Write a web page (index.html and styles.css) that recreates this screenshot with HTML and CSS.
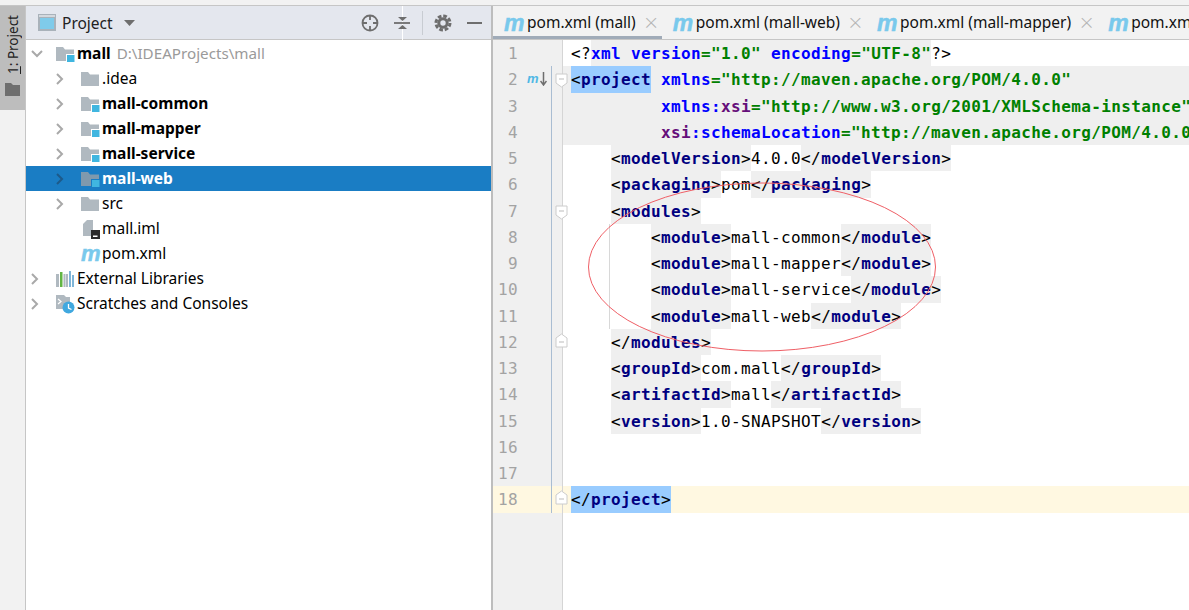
FILE: index.html
```html
<!DOCTYPE html>
<html lang="en">
<head>
<meta charset="utf-8">
<title>pom.xml (mall)</title>
<link rel="stylesheet" href="styles.css">
</head>
<body>
<svg class="defs" width="0" height="0" aria-hidden="true">
  <symbol id="folder" viewBox="0 0 20 16"><path d="M1 1h7l2 2.5h9V15H1z" fill="#b0b9c0"/></symbol>
  <symbol id="module" viewBox="0 0 20 16"><path d="M1 1h7l2 2.5h9V15H1z" fill="#b0b9c0"/><path d="M11 8h8v8h-8z" fill="#fff"/><path d="M12 9h7.500v7.500H12z" fill="#40b6e0"/></symbol>
  <symbol id="module-sel" viewBox="0 0 20 16"><path d="M1 1h7l2 2.500h9V15H1z" fill="#7f99ad"/><path d="M11 8h8.500v8.500H11z" fill="#1a7dc4"/><path d="M12 9h7.500v7.500H12z" fill="#40b6e0"/></symbol>
  <symbol id="chev" viewBox="0 0 10 14"><path d="M2 2l5 5-5 5" fill="none" stroke="currentColor" stroke-width="2"/></symbol>
</svg>
<div class="topstrip"></div>
<div class="main">
  <aside class="rail">
    <div class="rail-btn">
      <span class="rail-label"><u>1</u>: Project</span>
      <svg class="rail-icon" width="15" height="13" viewBox="0 0 15 13"><path d="M0 0h6l2 2h7v11H0z" fill="#6e6e6e"/></svg>
    </div>
  </aside>
  <section class="panel">
    <header class="panel-head">
      <svg class="head-win" width="18" height="17" viewBox="0 0 18 17"><path d="M0 0h18v17H0z" fill="#a9b2ba"/><path d="M1 1h16v2H1z" fill="#d4d9de"/><path d="M2 4h14v11H2z" fill="#7fcbea"/></svg>
      <span class="head-title">Project</span>
      <svg class="head-caret" width="11" height="6" viewBox="0 0 11 6"><path d="M0 0h11L5.500 6z" fill="#6e6e6e"/></svg>
      <div class="head-tools">
        <svg width="18" height="18" viewBox="0 0 18 18" class="tool-locate"><circle cx="9" cy="9" r="7.500" fill="none" stroke="#6e6e6e" stroke-width="1.800"/><path d="M9 1v5M9 12v5M1 9h5M12 9h5" stroke="#6e6e6e" stroke-width="1.800"/></svg>
        <svg width="16" height="34" viewBox="0 0 16 34" class="tool-collapse"><path d="M8.500 0v34" stroke="#fff" stroke-width="1"/><path d="M4 11h9l-4.500 4zM4 23h9l-4.500-4z" fill="#6e6e6e"/><path d="M0 17h16" stroke="#6e6e6e" stroke-width="1.800"/></svg>
        <span class="tool-sep"></span>
        <svg width="18" height="18" viewBox="0 0 18 18" class="tool-gear"><circle cx="9" cy="9" r="7" fill="none" stroke="#6e6e6e" stroke-width="3" stroke-dasharray="3.700 1.800"/><circle cx="9" cy="9" r="4.200" fill="none" stroke="#6e6e6e" stroke-width="3"/></svg>
        <svg width="15" height="2" viewBox="0 0 15 2" class="tool-min"><path d="M0 0h15v2H0z" fill="#6e6e6e"/></svg>
      </div>
    </header>
    <div class="tree">
      <div class="node"><svg class="arrow open" width="14" height="10" viewBox="0 0 14 10"><path d="M2 2l5 5 5-5" fill="none" stroke="currentColor" stroke-width="2"/></svg><svg class="ico" width="20" height="16"><use href="#module"/></svg><b>mall</b><span class="path">D:\IDEAProjects\mall</span></div>
      <div class="node lvl"><svg class="arrow" width="10" height="14"><use href="#chev"/></svg><svg class="ico" width="20" height="16"><use href="#folder"/></svg><span>.idea</span></div>
      <div class="node lvl"><svg class="arrow" width="10" height="14"><use href="#chev"/></svg><svg class="ico" width="20" height="16"><use href="#module"/></svg><b>mall-common</b></div>
      <div class="node lvl"><svg class="arrow" width="10" height="14"><use href="#chev"/></svg><svg class="ico" width="20" height="16"><use href="#module"/></svg><b>mall-mapper</b></div>
      <div class="node lvl"><svg class="arrow" width="10" height="14"><use href="#chev"/></svg><svg class="ico" width="20" height="16"><use href="#module"/></svg><b>mall-service</b></div>
      <div class="node lvl selected"><svg class="arrow" width="10" height="14"><use href="#chev"/></svg><svg class="ico" width="20" height="16"><use href="#module-sel"/></svg><b>mall-web</b></div>
      <div class="node lvl"><svg class="arrow" width="10" height="14"><use href="#chev"/></svg><svg class="ico" width="20" height="16"><use href="#folder"/></svg><span>src</span></div>
      <div class="node lvl leaf"><svg class="ico" width="20" height="20" viewBox="0 0 20 20"><path d="M7 1h6v16H3V5z" fill="#b0b9c0"/><path d="M11 11h9v9h-9z" fill="#2b2b2b"/><path d="M13 16.500h4.500v1.500H13z" fill="#fff"/></svg><span>mall.iml</span></div>
      <div class="node lvl leaf"><span class="m-ico ico-m">m</span><span>pom.xml</span></div>
      <div class="node"><svg class="arrow" width="10" height="14"><use href="#chev"/></svg><svg class="ico" width="20" height="18" viewBox="0 0 20 18"><path d="M1 4h3v13H1zM11 4h2v13h-2z" fill="#b0b9c0"/><path d="M5 2h2.500v15H5z" fill="#62b543"/><path d="M8.500 4h2v13h-2z" fill="#b0b9c0"/><path d="M14 1h2v16h-2z" fill="#7fb5d8"/><path d="M17 5h2v12h-2z" fill="#7fb5d8"/></svg><span>External Libraries</span></div>
      <div class="node"><svg class="arrow" width="10" height="14"><use href="#chev"/></svg><svg class="ico" width="20" height="20" viewBox="0 0 20 20"><path d="M1 1h8l2 2h4v12H1z" fill="#b0b9c0"/><path d="M3 5l3 2.500L3 10" fill="none" stroke="#fff" stroke-width="1.200"/><circle cx="13.500" cy="13.500" r="6" fill="#40a8df"/><path d="M13.500 10v4l3 1.500" fill="none" stroke="#fff" stroke-width="1.300"/></svg><span>Scratches and Consoles</span></div>
    </div>
  </section>
  <div class="split"></div>
  <section class="editor">
    <nav class="tabs">
      <div class="tab active"><span class="m-ico">m</span><span class="tab-name">pom.xml (mall)</span><span class="tab-x">×</span></div>
      <div class="tab"><span class="m-ico">m</span><span class="tab-name">pom.xml (mall-web)</span><span class="tab-x">×</span></div>
      <div class="tab"><span class="m-ico">m</span><span class="tab-name">pom.xml (mall-mapper)</span><span class="tab-x">×</span></div>
      <div class="tab"><span class="m-ico">m</span><span class="tab-name">pom.xml (mall)</span></div>
    </nav>
    <div class="lines">
      <div class="row"><span class="num">1</span><span class="mark"></span><span class="fold novcs"></span><code class="code"><i class="b">&lt;?</i><span class="hl"><i class="a">xml version</i><i class="v">="1.0"</i> <i class="a">encoding</i><i class="v">="UTF-8"</i></span><i class="b">?&gt;</i></code></div>
      <div class="row"><span class="num">2</span><span class="mark"><span class="m-small">m</span><svg width="7" height="14" viewBox="0 0 7 14"><path d="M3.500 0v13M.5 9l3 4 3-4" fill="none" stroke="#6e6e6e" stroke-width="1.500"/></svg></span><span class="fold"><svg class="fold-ico" width="13" height="15" viewBox="0 0 13 15"><path d="M1 1h11v9l-5.500 4L1 10z" fill="#fff" stroke="#ccc"/><path d="M4 6h5" stroke="#bbb"/></svg></span><code class="code full"><span class="sel"><i class="b">&lt;</i><i class="t">project</i></span> <i class="a">xmlns</i><i class="v">="http://maven.apache.org/POM/4.0.0"</i></code></div>
      <div class="row"><span class="num">3</span><span class="mark"></span><span class="fold"></span><code class="code full">         <i class="a">xmlns:</i><i class="n">xsi</i><i class="v">="http://www.w3.org/2001/XMLSchema-instance"</i></code></div>
      <div class="row"><span class="num">4</span><span class="mark"></span><span class="fold"></span><code class="code full">         <i class="n">xsi</i><i class="a">:schemaLocation</i><i class="v">="http://maven.apache.org/POM/4.0.0 http://maven.apache.org/xsd/maven-4.0.0.xsd"</i></code></div>
      <div class="row"><span class="num">5</span><span class="mark"></span><span class="fold"></span><code class="code">    <span class="hl"><i class="b">&lt;</i><i class="t">modelVersion</i><i class="b">&gt;</i></span>4.0.0<span class="hl"><i class="b">&lt;/</i><i class="t">modelVersion</i><i class="b">&gt;</i></span></code></div>
      <div class="row"><span class="num">6</span><span class="mark"></span><span class="fold"></span><code class="code">    <span class="hl"><i class="b">&lt;</i><i class="t">packaging</i><i class="b">&gt;</i></span>pom<span class="hl"><i class="b">&lt;/</i><i class="t">packaging</i><i class="b">&gt;</i></span></code></div>
      <div class="row"><span class="num">7</span><span class="mark"></span><span class="fold"><svg class="fold-ico" width="13" height="15" viewBox="0 0 13 15"><path d="M1 1h11v9l-5.500 4L1 10z" fill="#fff" stroke="#ccc"/><path d="M4 6h5" stroke="#bbb"/></svg></span><code class="code">    <span class="hl"><i class="b">&lt;</i><i class="t">modules</i><i class="b">&gt;</i></span></code></div>
      <div class="row"><span class="num">8</span><span class="mark"></span><span class="fold"></span><code class="code guide">        <span class="hl"><i class="b">&lt;</i><i class="t">module</i><i class="b">&gt;</i></span>mall-common<span class="hl"><i class="b">&lt;/</i><i class="t">module</i><i class="b">&gt;</i></span></code></div>
      <div class="row"><span class="num">9</span><span class="mark"></span><span class="fold"></span><code class="code guide">        <span class="hl"><i class="b">&lt;</i><i class="t">module</i><i class="b">&gt;</i></span>mall-mapper<span class="hl"><i class="b">&lt;/</i><i class="t">module</i><i class="b">&gt;</i></span></code></div>
      <div class="row"><span class="num">10</span><span class="mark"></span><span class="fold"></span><code class="code guide">        <span class="hl"><i class="b">&lt;</i><i class="t">module</i><i class="b">&gt;</i></span>mall-service<span class="hl"><i class="b">&lt;/</i><i class="t">module</i><i class="b">&gt;</i></span></code></div>
      <div class="row"><span class="num">11</span><span class="mark"></span><span class="fold"></span><code class="code guide">        <span class="hl"><i class="b">&lt;</i><i class="t">module</i><i class="b">&gt;</i></span>mall-web<span class="hl"><i class="b">&lt;/</i><i class="t">module</i><i class="b">&gt;</i></span></code></div>
      <div class="row"><span class="num">12</span><span class="mark"></span><span class="fold"><svg class="fold-ico up" width="13" height="15" viewBox="0 0 13 15"><path d="M1 14h11V5L6.500 1 1 5z" fill="#fff" stroke="#ccc"/><path d="M4 9h5" stroke="#bbb"/></svg></span><code class="code">    <span class="hl"><i class="b">&lt;/</i><i class="t">modules</i><i class="b">&gt;</i></span></code></div>
      <div class="row"><span class="num">13</span><span class="mark"></span><span class="fold"></span><code class="code">    <span class="hl"><i class="b">&lt;</i><i class="t">groupId</i><i class="b">&gt;</i></span>com.mall<span class="hl"><i class="b">&lt;/</i><i class="t">groupId</i><i class="b">&gt;</i></span></code></div>
      <div class="row"><span class="num">14</span><span class="mark"></span><span class="fold"></span><code class="code">    <span class="hl"><i class="b">&lt;</i><i class="t">artifactId</i><i class="b">&gt;</i></span>mall<span class="hl"><i class="b">&lt;/</i><i class="t">artifactId</i><i class="b">&gt;</i></span></code></div>
      <div class="row"><span class="num">15</span><span class="mark"></span><span class="fold"></span><code class="code">    <span class="hl"><i class="b">&lt;</i><i class="t">version</i><i class="b">&gt;</i></span>1.0-SNAPSHOT<span class="hl"><i class="b">&lt;/</i><i class="t">version</i><i class="b">&gt;</i></span></code></div>
      <div class="row"><span class="num">16</span><span class="mark"></span><span class="fold"></span><code class="code"></code></div>
      <div class="row"><span class="num">17</span><span class="mark"></span><span class="fold"></span><code class="code"></code></div>
      <div class="row current"><span class="num">18</span><span class="mark"></span><span class="fold"><svg class="fold-ico up" width="13" height="15" viewBox="0 0 13 15"><path d="M1 14h11V5L6.500 1 1 5z" fill="#fff" stroke="#ccc"/><path d="M4 9h5" stroke="#bbb"/></svg></span><code class="code"><span class="sel"><i class="b">&lt;/</i><i class="t">project</i><i class="b">&gt;</i></span></code></div>
      <div class="row filler"><span class="num"></span><span class="mark"></span><span class="fold novcs"></span><span class="code"></span></div>
      <svg class="circle" width="352" height="172" viewBox="0 0 352 172"><ellipse cx="176" cy="86" rx="173.500" ry="84" fill="none" stroke="#ef5f66" stroke-width="1"/></svg>
    </div>
  </section>
</div>
</body>
</html>
```

FILE: styles.css
```css
* { box-sizing: border-box; }
html, body { margin: 0; height: 100%; }
body {
  display: flex;
  flex-direction: column;
  overflow: hidden;
  background: #f2f2f2;
  font-family: "Noto Sans", "Open Sans", sans-serif;
  color: #000;
}
.defs { position: absolute; }
.topstrip { height: 6px; flex: none; background: #f2f2f2; border-bottom: 1px solid #c6c6c6; }
.main { flex: 1; display: flex; min-height: 0; }

.rail { width: 26px; flex: none; background: #f2f2f2; border-right: 1px solid #c6c6c6; }
.rail-btn {
  height: 104px;
  background: #bdbdbd;
  display: flex;
  flex-direction: column;
  align-items: center;
  padding-top: 9px;
  gap: 9px;
}
.rail-label { writing-mode: vertical-rl; transform: rotate(180deg); font-size: 13.500px; line-height: 16px; color: #222; }
.rail-icon { flex: none; }

.panel { width: 465px; flex: none; display: flex; flex-direction: column; background: #fff; }
.panel-head {
  height: 34px;
  flex: none;
  background: #e4e7ee;
  border-bottom: 1px solid #c6c6c6;
  display: flex;
  align-items: center;
  padding-left: 12px;
}
.head-win { flex: none; }
.head-title { margin-left: 6px; font-size: 15.500px; color: #222; }
.head-caret { margin-left: 11px; margin-top: 1px; }
.head-tools { margin-left: auto; display: flex; align-items: center; padding-right: 9px; }
.tool-collapse { margin-left: 15px; }
.tool-sep { width: 1px; height: 24px; background: #c8ccd2; margin: 0 11px 0 12px; }
.tool-min { margin-left: 15px; }

.tree { padding-top: 1px; font-size: 15.500px; }
.node { height: 25px; display: flex; align-items: center; padding-left: 4px; white-space: nowrap; color: #000; line-height: 25px; }
.node.lvl { padding-left: 29px; }
.node b { font-weight: 700; }
.arrow { color: #a9a9a9; flex: none; margin-right: 15px; }
.arrow.open { margin-right: 11px; }
.node .ico { flex: none; margin-right: 2px; }
.node.leaf { padding-left: 54px; }
.path { color: #9a9a9a; margin-left: 6px; font-size: 15.200px; }
.selected { background: #1a7dc4; color: #fff; }
.selected .arrow { color: #1d5a8a; }

.split { width: 2px; flex: none; background: #bdbdbd; }

.editor { flex: 1; min-width: 0; display: flex; flex-direction: column; overflow: hidden; background: #fff; }
.tabs {
  height: 34px;
  flex: none;
  display: flex;
  background: #f2f2f2;
  border-bottom: 1px solid #c6c6c6;
  overflow: hidden;
  white-space: nowrap;
}
.tab { display: flex; align-items: center; flex: none; padding: 0 8px 2px 11px; font-size: 15.500px; color: #111; }
.tab.active { box-shadow: inset 0 -3px 0 #a0abb8; }
.m-ico {
  font-family: "Liberation Sans", sans-serif;
  font-weight: 700;
  font-style: italic;
  font-size: 23px;
  line-height: 25px;
  color: #79c9ec;
  -webkit-text-stroke: .5px #79c9ec;
  width: 20px;
  margin-right: 3px;
  margin-top: 3px;
}
.ico-m { font-size: 22px; width: 18px; margin: 0 3px 0 1px; }
.tab-x { color: #b5b5b5; font-size: 20px; line-height: 20px; margin-left: 7px; width: 11px; font-family: "DejaVu Sans", sans-serif; font-weight: 300; }

.lines { position: relative; flex: 1; display: flex; flex-direction: column; min-height: 0; }
.row { height: 26.250px; flex: none; display: flex; }
.row.filler { flex: 1; }
.num {
  width: 25px;
  flex: none;
  background: #f0f0f0;
  text-align: right;
  color: #a3a3a3;
  font: 16px/28px "DejaVu Sans Mono", monospace;
  letter-spacing: .37px;
}
.mark { width: 33px; flex: none; background: #f0f0f0; display: flex; align-items: center; padding-left: 9px; }
.m-small { font: italic 700 13px/14px "Liberation Sans", sans-serif; color: #4fb8e5; margin-right: 1px; }
.fold { width: 12px; flex: none; background: #f0f0f0; border-left: 1px solid #a9bdd2; border-right: 1px solid #d5d5d5; position: relative; }
.fold.novcs { border-left-color: #f0f0f0; }
.fold-ico { position: absolute; left: 3px; top: 7px; }
.fold-ico.up { top: 4px; }
.code {
  flex: 1;
  padding-left: 8px;
  white-space: pre;
  font: 16px/28px "DejaVu Sans Mono", monospace;
  letter-spacing: .37px;
  color: #000;
  min-width: 0;
}
.code i { font-style: normal; }
.full { background: #efefef; }
.hl { background: #efefef; display: inline-block; height: 26.250px; }
.sel { background: #99ccff; display: inline-block; height: 26.250px; }
.b { color: #000; }
.t { color: #000080; font-weight: 700; }
.a { color: #0000ff; font-weight: 700; }
.n { color: #660e7a; font-weight: 700; }
.v { color: #008000; font-weight: 700; }
.guide { background: linear-gradient(#d8d8d8, #d8d8d8) 46px 0 / 1px 100% no-repeat; }
.current .num, .current .mark, .current .fold, .current .code { background-color: #fff8e1; }
.circle { position: absolute; left: 92.500px; top: 140.500px; pointer-events: none; }
```
